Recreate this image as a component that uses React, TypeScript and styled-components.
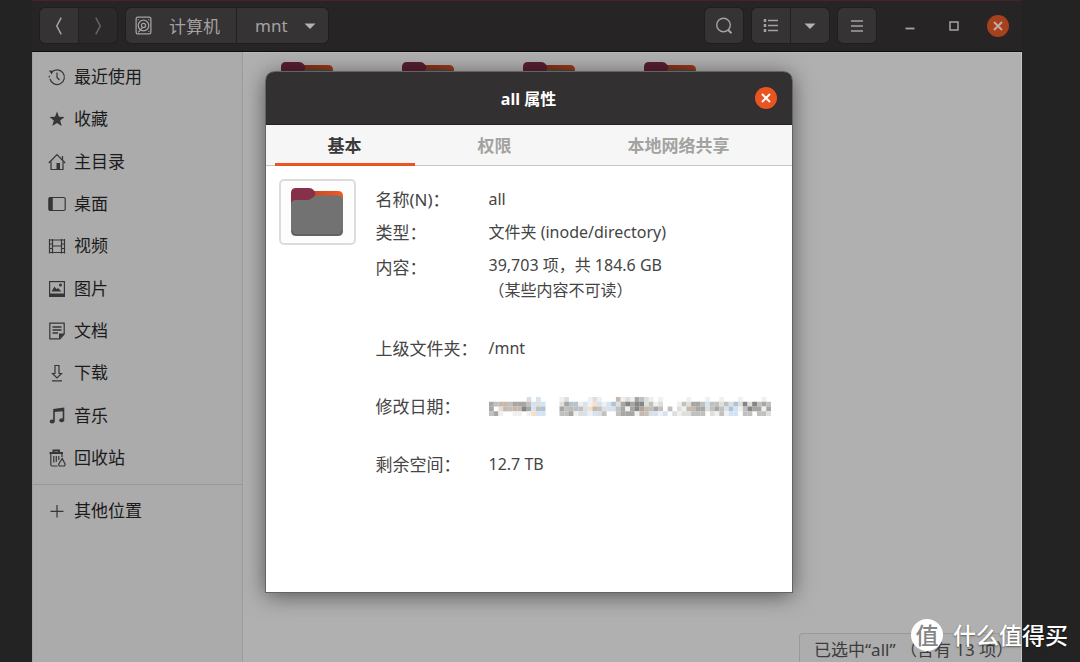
import React from 'react';
import styled, { createGlobalStyle, css } from 'styled-components';

const GlobalStyle = createGlobalStyle`
  * { box-sizing: border-box; }
  body {
    margin: 0;
    background: #232323;
    font-family: "Noto Sans", "Noto Sans CJK SC", sans-serif;
    font-size: 17px;
  }
  button { font: inherit; padding: 0; border: 0; background: none; color: inherit; }
  svg { display: block; flex: none; }
`;

const Desktop = styled.div`
  position: relative;
  height: 100vh;
  padding: 0 58px 0 32px;
  overflow: hidden;
`;

const Window = styled.main`
  position: relative;
  display: flex;
  flex-direction: column;
  height: 100%;
  background: #b0b0b0;
`;

const HeaderBar = styled.header`
  display: flex;
  align-items: center;
  gap: 9px;
  height: 52px;
  flex: none;
  padding: 0 13px 1px 8px;
  background: #262425;
  border-top: 1px solid #4a2029;
  border-bottom: 1px solid #0c0c0c;
  color: #a4a2a2;
`;

const ButtonGroup = styled.div`
  display: flex;
  gap: 1px;
  border-radius: 5px;
  background: #222021;
  box-shadow: 0 0 0 1px #201e1f;
  overflow: hidden;
`;

const BarButton = styled.button<{ $dim?: boolean; $path?: 'root' | 'leaf' }>`
  display: flex;
  align-items: center;
  justify-content: center;
  gap: 16px;
  min-width: 38px;
  height: 35px;
  background: ${p => (p.$dim ? '#2b292a' : '#353334')};
  color: ${p => (p.$dim ? '#666468' : 'inherit')};
  ${p => p.$path === 'root' && css`padding: 0 16px 0 8px;`}
  ${p => p.$path === 'leaf' && css`padding: 0 12px 0 18px;`}
`;

const Spacer = styled.div`
  flex: 1;
`;

const WindowControls = styled.div`
  display: flex;
  align-items: center;
  gap: 22px;
  padding-left: 14px;
`;

const ControlButton = styled.button`
  display: flex;
  align-items: center;
  justify-content: center;
  width: 22px;
  height: 22px;
`;

const CloseButton = styled(ControlButton)<{ $dim?: boolean }>`
  border-radius: 50%;
  background: ${p => (p.$dim ? '#a8401d' : '#e95420')};
  color: ${p => (p.$dim ? '#c0aaa2' : '#fff')};
`;

const Body = styled.div`
  display: flex;
  flex: 1;
  min-height: 0;
`;

const Sidebar = styled.nav`
  width: 211px;
  flex: none;
  padding-top: 4px;
  background: #ababab;
  border-left: 1px solid #a2a2a2;
  border-right: 1px solid #9c9c9c;
`;

const PlaceList = styled.ul`
  display: grid;
  grid-auto-rows: 1fr;
  height: 423px;
  margin: 0;
  padding: 0;
  list-style: none;
`;

const Place = styled.a`
  display: flex;
  align-items: center;
  gap: 8px;
  height: 100%;
  padding-left: 15px;
  line-height: 24px;
  color: #1b1b1b;
  text-decoration: none;
  svg { color: #363638; }
`;

const OtherPlaces = styled.div`
  height: 48px;
  margin-top: 5px;
  padding-top: 4px;
  border-top: 1px solid #989898;
`;

const Files = styled.section`
  position: relative;
  flex: 1;
  padding: 9px 0 0 38px;
  border-right: 1px solid #c4c4c4;
  border-top: 1px solid #bababa;
`;

const FolderGrid = styled.div`
  display: grid;
  grid-template-columns: repeat(auto-fill, 121px);
  filter: brightness(0.65);
`;

const StatusBar = styled.footer`
  position: absolute;
  right: 0;
  bottom: 0;
  width: 222px;
  height: 29px;
  padding: 4px 0 0 14px;
  overflow: hidden;
  white-space: nowrap;
  line-height: 24px;
  color: #3c3c3c;
  background: #adadad;
  border: solid #999;
  border-width: 1px 0 0 1px;
  border-top-left-radius: 4px;
`;

const DialogLayer = styled.div`
  position: absolute;
  inset: 0;
  display: flex;
  align-items: flex-start;
  justify-content: center;
  padding: 72px 0 0 3px;
`;

const Dialog = styled.section`
  width: 526px;
  min-height: 520px;
  background: #fff;
  border-radius: 9px 9px 0 0;
  box-shadow: 0 0 0 1px #646464, 0 3px 22px rgba(0, 0, 0, 0.55);
`;

const DialogHeader = styled.header`
  display: grid;
  grid-template-columns: 1fr auto 1fr;
  align-items: center;
  height: 53px;
  padding: 0 15px;
  border-radius: 8px 8px 0 0;
  background: #333031;
  border-bottom: 1px solid #242223;
  color: #fff;
  ${CloseButton} { grid-column: 3; justify-self: end; }
`;

const DialogTitle = styled.h1`
  grid-column: 2;
  margin: 0;
  font-size: 16px;
  font-weight: 700;
`;

const Tabs = styled.div`
  display: flex;
  gap: 10px;
  height: 41px;
  padding: 0 9px;
  background: #f6f6f6;
  border-bottom: 1px solid #c6c6c6;
`;

const Tab = styled.button<{ $active?: boolean }>`
  flex: 1 1 auto;
  height: 41px;
  font-weight: 700;
  color: ${p => (p.$active ? '#3a3a3a' : '#a2a2a0')};
  border-bottom: 3px solid ${p => (p.$active ? '#e95420' : 'transparent')};
`;

const Properties = styled.div`
  display: flex;
  align-items: flex-start;
  gap: 20px;
  padding: 13px 13px 0;
`;

const IconButton = styled.button`
  display: flex;
  align-items: center;
  justify-content: center;
  width: 77px;
  height: 66px;
  background: #fdfdfd;
  border: 2px solid #dcdcd8;
  border-radius: 5px;
`;

const Details = styled.dl`
  display: grid;
  grid-template-columns: 113px 1fr;
  flex: 1;
  margin: 0;
  padding-top: 4px;
  grid-template-rows: 33px 33px 70px 58px 58px 58px;
  align-items: center;
  line-height: 25px;
  color: #454545;
  white-space: nowrap;
`;

const Term = styled.dt<{ $top?: boolean }>`
  ${p => p.$top && css`align-self: start; padding-top: 6px;`}
`;

const Value = styled.dd<{ $top?: boolean }>`
  margin: 0;
  font-size: 16px;
  ${p => p.$top && css`align-self: start; padding-top: 4px;`}
`;

const Watermark = styled.div`
  position: absolute;
  right: 12px;
  bottom: 11px;
  display: flex;
  align-items: center;
  gap: 10px;
  font-size: 23px;
  line-height: 32px;
  font-weight: 500;
  color: #fff;
  text-shadow: 0 1px 2px rgba(0, 0, 0, 0.5);
`;

const WatermarkLogo = styled.span`
  display: flex;
  align-items: center;
  justify-content: center;
  width: 32px;
  height: 32px;
  border-radius: 50%;
  background: #fff;
  color: #858585;
  text-shadow: none;
`;

const Icon = ({ children, size = 18 }: { children: React.ReactNode; size?: number }) => (
  <svg width={size} height={size} viewBox="0 0 18 18" fill="none" stroke="currentColor" strokeWidth="1.2" aria-hidden="true">
    {children}
  </svg>
);

const Chevron = ({ d }: { d: string }) => (
  <Icon size={20}><path d={d} strokeWidth="1.4" /></Icon>
);

const Caret = () => (
  <svg width="12" height="6" viewBox="0 0 12 6" fill="#b4b2b2" aria-hidden="true"><path d="M0.500 0.500H11.500L6 6Z" /></svg>
);

const Cross = () => (
  <svg width="10" height="10" viewBox="0 0 10 10" stroke="currentColor" strokeWidth="2" aria-hidden="true">
    <path d="M1 1 9 9M9 1 1 9" />
  </svg>
);

const Folder = () => (
  <svg width="52" height="48" viewBox="0 0 52 48" aria-hidden="true">
    <defs>
      <linearGradient id="tab" x1="0" x2="1"><stop offset="0" stopColor="#a8402c" /><stop offset="1" stopColor="#f05a22" /></linearGradient>
    </defs>
    <path d="M6 3H47Q52 3 52 8V42H0V8Z" fill="url(#tab)" />
    <path d="M0 18V5Q0 0 5 0H18Q21 0 22.500 2L24 4Q25 6 23 9L18 14Z" fill="#86304a" />
    <path d="M0 17Q0 12 5 12H16Q19 12 21 10T26 7.500H47Q52 8 52 12V43Q52 48 47 48H5Q0 48 0 43Z" fill="#727272" />
    <path d="M1 43Q1 47 5 47H47Q51 47 51 43" fill="none" stroke="#555" />
  </svg>
);

const placeIcons = {
  recent: (
    <>
      <path d="M3.500 4.500A7.300 7.300 0 1 1 2 11" />
      <path d="M1.300 7.800v1.600" />
      <path d="M9 4.500V9.500L11.500 12" />
      <path d="M0.800 2.500 5 2.800 3.800 6.500Z" fill="currentColor" stroke="none" />
    </>
  ),
  star: <path d="M9 1.500 11 6.700 16.500 7 12.200 10.500 13.700 15.900 9 12.900 4.300 15.900 5.800 10.500 1.500 7 7 6.700Z" fill="currentColor" stroke="none" />,
  home: (
    <>
      <path d="M0.800 10 9 1.500 17.200 10" />
      <path d="M3 8.500V16.500H15V8.500M14.500 3v4" />
      <path d="M8.500 10h3.500v6.500H8.500Z" fill="currentColor" stroke="none" />
    </>
  ),
  desktop: (
    <>
      <rect x="0.800" y="2.500" width="16.400" height="13" rx="1.500" />
      <path d="M1 2.500H4.800V15.500H1Z" fill="currentColor" stroke="none" />
    </>
  ),
  video: (
    <>
      <path d="M1.500 2V16.500M4.500 2V16.500M13.500 2V16.500M16.500 2V16.500M4.500 3H13.500M4.500 9H13.500M4.500 15.500H13.500" />
      <path d="M1.500 3h3M1.500 7h3M1.500 11.500h3M1.500 15.500h3M13.500 3h3M13.500 7h3M13.500 11.500h3M13.500 15.500h3" />
    </>
  ),
  picture: (
    <>
      <rect x="1.600" y="1.600" width="14.800" height="14.800" />
      <path d="M1.600 13.500H16.400V16.500H1.600ZM3.500 11.500 6.500 6.500 8.500 9.200 10 8 13.500 11.500Z" fill="currentColor" stroke="none" />
      <circle cx="12.500" cy="5" r="1.500" fill="currentColor" stroke="none" />
    </>
  ),
  document: (
    <>
      <path d="M1.800 1.200H16.200V12L12 16.800H1.800Z" />
      <path d="M4.500 5h9M4.500 8h9M4.500 11h5.500" strokeWidth="1.400" />
      <path d="M11 17V11.500H16.500Z" fill="currentColor" stroke="none" />
    </>
  ),
  download: <path d="M7 1.500H11V9.500H13.500L9 14 4.500 9.500H7ZM4 16.800H14" />,
  music: (
    <>
      <path d="M6 14V2.700L15.500 1.500V12.500" strokeWidth="1.600" />
      <path d="M6 2.500 15.500 1.200V4.200L6 5Z" fill="currentColor" stroke="none" />
      <ellipse cx="4.200" cy="14.500" rx="2.500" ry="2" fill="currentColor" stroke="none" />
      <ellipse cx="13.700" cy="13.200" rx="2.500" ry="2" fill="currentColor" stroke="none" />
    </>
  ),
  trash: (
    <>
      <path d="M1.500 4H15M5.500 3.500V1.500H11V3.500" strokeWidth="2" />
      <path d="M2.800 5V15.500Q2.800 17 4.300 17H9.500M14 5V8" />
      <path d="M5.800 7V13.500M8.300 7V13M10.800 7V11" />
      <path d="M11.500 17Q9.800 15.500 11.500 13.800L14.200 9.500 16.500 13.800Q18 15.500 16.200 17Z" />
    </>
  ),
  plus: <path d="M9 3V15.500M2.500 9.300H15.500" />,
};

const places: { icon: keyof typeof placeIcons; label: string }[] = [
  { icon: 'recent', label: '最近使用' },
  { icon: 'star', label: '收藏' },
  { icon: 'home', label: '主目录' },
  { icon: 'desktop', label: '桌面' },
  { icon: 'video', label: '视频' },
  { icon: 'picture', label: '图片' },
  { icon: 'document', label: '文档' },
  { icon: 'download', label: '下载' },
  { icon: 'music', label: '音乐' },
  { icon: 'trash', label: '回收站' },
];

const mosaicRows = [
  '........2.b....12....121...O1214321.1.....1...1..1...1....1.',
  '43OO34443b2b...24B31b1ob1bB2454552312...132443b33232B2525343',
  '4.2O3OO54b3B...43OB32oO32b2341454O343.3.21OO442343bBb1354414',
  '341..11.1obb...33412b1b23..34441O32b1b.2122333.2131bb.33.332',
];

const mosaicColors: Record<string, string> = {
  '1': '#f0f0ef', '2': '#dededd', '3': '#c0c0bf', '4': '#a6a6a5', '5': '#858585',
  b: '#d3e3f1', B: '#adc4d8', o: '#f3e0cd', O: '#c9b8a9',
};

const Mosaic = () => (
  <svg width="282" height="19" viewBox="0 0 60 4" preserveAspectRatio="none" role="img" aria-label="修改日期">
    {mosaicRows.flatMap((row, y) =>
      [...row].map((c, x) => mosaicColors[c] && (
        <rect key={`${x}-${y}`} x={x} y={y} width="1.020" height="1.020" fill={mosaicColors[c]} />
      )),
    )}
  </svg>
);

export default function App() {
  return (
    <Desktop>
      <GlobalStyle />
      <Window>
        <HeaderBar>
          <ButtonGroup>
            <BarButton aria-label="后退"><Chevron d="M11 1.500 7 9 11 16.500" /></BarButton>
            <BarButton $dim aria-label="前进"><Chevron d="M7 1.500 11 9 7 16.500" /></BarButton>
          </ButtonGroup>
          <ButtonGroup>
            <BarButton $path="root">
              <Icon size={19}>
                <rect x="2" y="1" width="14" height="16" rx="1.500" />
                <circle cx="9" cy="9" r="5" />
                <circle cx="9" cy="9" r="2" />
                <path d="M4 15.500 8 11M4 3v1M14 3v1M14 14v1" />
              </Icon>
              计算机
            </BarButton>
            <BarButton $path="leaf">mnt<Caret /></BarButton>
          </ButtonGroup>
          <Spacer />
          <ButtonGroup>
            <BarButton aria-label="搜索">
              <Icon><circle cx="8.500" cy="8" r="6.800" strokeWidth="1.400" /><path d="M13.200 13 16.500 16.300" strokeWidth="2" /></Icon>
            </BarButton>
          </ButtonGroup>
          <ButtonGroup>
            <BarButton aria-label="列表视图">
              <Icon>
                <path d="M6 3.500H16M6 8.500H16M6 13.500H16" strokeWidth="1.500" />
                <path d="M3 2v3M3 7v3M3 12v3" strokeWidth="2.500" />
              </Icon>
            </BarButton>
            <BarButton aria-label="视图选项"><Caret /></BarButton>
          </ButtonGroup>
          <ButtonGroup>
            <BarButton aria-label="菜单">
              <Icon><path d="M3 4H15M3 9H15M3 14H15" strokeWidth="1.500" /></Icon>
            </BarButton>
          </ButtonGroup>
          <WindowControls>
            <ControlButton aria-label="最小化"><Icon><path d="M4.500 11.500H13.500" strokeWidth="1.800" /></Icon></ControlButton>
            <ControlButton aria-label="最大化"><Icon><rect x="5" y="5" width="8" height="8" strokeWidth="1.500" /></Icon></ControlButton>
            <CloseButton $dim aria-label="关闭窗口"><Cross /></CloseButton>
          </WindowControls>
        </HeaderBar>
        <Body>
          <Sidebar>
            <PlaceList>
              {places.map(p => (
                <li key={p.label}>
                  <Place href="#"><Icon>{placeIcons[p.icon]}</Icon>{p.label}</Place>
                </li>
              ))}
            </PlaceList>
            <OtherPlaces>
              <Place href="#"><Icon>{placeIcons.plus}</Icon>其他位置</Place>
            </OtherPlaces>
          </Sidebar>
          <Files>
            <FolderGrid>
              {[0, 1, 2, 3].map(i => <Folder key={i} />)}
            </FolderGrid>
            <StatusBar>已选中“all” （含有 13 项）</StatusBar>
          </Files>
        </Body>
        <DialogLayer>
          <Dialog role="dialog" aria-labelledby="dialog-title">
            <DialogHeader>
              <DialogTitle id="dialog-title">all 属性</DialogTitle>
              <CloseButton aria-label="关闭"><Cross /></CloseButton>
            </DialogHeader>
            <Tabs role="tablist">
              <Tab role="tab" aria-selected="true" $active>基本</Tab>
              <Tab role="tab" aria-selected="false">权限</Tab>
              <Tab role="tab" aria-selected="false">本地网络共享</Tab>
            </Tabs>
            <Properties>
              <IconButton aria-label="文件夹图标"><Folder /></IconButton>
              <Details>
                <Term>名称(N)：</Term>
                <Value>all</Value>
                <Term>类型：</Term>
                <Value>文件夹 (inode/directory)</Value>
                <Term $top>内容：</Term>
                <Value $top>39,703 项，共 184.6 GB<br />（某些内容不可读）</Value>
                <Term>上级文件夹：</Term>
                <Value>/mnt</Value>
                <Term>修改日期：</Term>
                <Value><Mosaic /></Value>
                <Term>剩余空间：</Term>
                <Value>12.7 TB</Value>
              </Details>
            </Properties>
          </Dialog>
        </DialogLayer>
      </Window>
      <Watermark><WatermarkLogo>值</WatermarkLogo>什么值得买</Watermark>
    </Desktop>
  );
}
